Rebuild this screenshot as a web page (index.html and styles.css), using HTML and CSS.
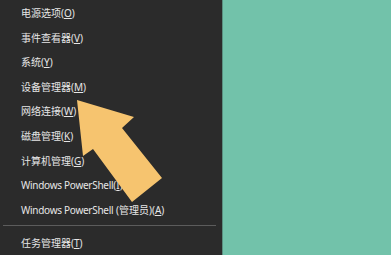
FILE: index.html
```html
<!DOCTYPE html>
<html lang="zh-CN">
<head>
<meta charset="utf-8">
<link rel="stylesheet" href="styles.css">
</head>
<body>
<div class="screen">
  <div class="menu">
    <ul class="items">
      <li class="item">电源选项(<u>O</u>)</li>
      <li class="item">事件查看器(<u>V</u>)</li>
      <li class="item">系统(<u>Y</u>)</li>
      <li class="item">设备管理器(<u>M</u>)</li>
      <li class="item">网络连接(<u>W</u>)</li>
      <li class="item">磁盘管理(<u>K</u>)</li>
      <li class="item">计算机管理(<u>G</u>)</li>
      <li class="item"><span class="latin">Windows PowerShell</span>(<u>I</u>)</li>
      <li class="item"><span class="latin">Windows PowerShell</span> (管理员)(<u>A</u>)</li>
    </ul>
    <div class="sep"></div>
    <ul class="items">
      <li class="item">任务管理器(<u>T</u>)</li>
    </ul>
  </div>
  <div class="desktop"></div>
  <svg class="arrow" width="391" height="255" viewBox="0 0 391 255">
    <polygon points="77,100 134,117 122,128 162,178 132,202 93,149 83,156" fill="#f6c46f"/>
  </svg>
</div>
</body>
</html>
```
FILE: styles.css
```css
html, body {
  margin: 0;
  padding: 0;
  background: #2b2b2b;
}
.screen {
  position: relative;
  display: flex;
  width: 391px;
  height: 255px;
  overflow: hidden;
}
.menu {
  width: 223px;
  background: #2b2b2b;
  padding-top: 1px;
  box-sizing: border-box;
  border-right: 1px solid #5a8f80;
}
.items {
  list-style: none;
  margin: 0;
  padding: 0;
}
.item {
  height: 24.6px;
  line-height: 24.6px;
  padding-left: 21px;
  font-family: "Noto Sans", "Noto Sans CJK SC", sans-serif;
  font-size: 10px;
  color: #e6e6e6;
  white-space: nowrap;
}
.latin {
  letter-spacing: -0.28px;
}
.item u {
  text-underline-offset: 1px;
}
.sep {
  height: 1px;
  background: #5c5c5c;
  margin: 3px 6px 5px 3px;
}
.desktop {
  flex: 1;
  background: #72c2aa;
}
.arrow {
  position: absolute;
  left: 0;
  top: 0;
}
```
